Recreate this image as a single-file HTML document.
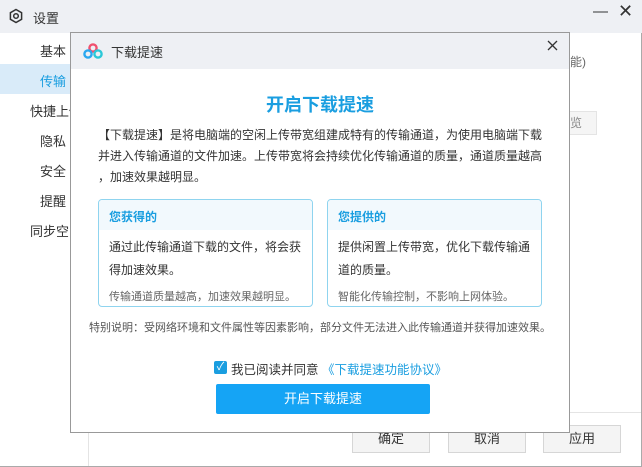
<!DOCTYPE html>
<html><head><meta charset="utf-8"><style>
*{margin:0;padding:0;box-sizing:border-box}
body{width:642px;height:467px;overflow:hidden;background:#fff;font-family:"Liberation Sans","Noto Sans CJK SC",sans-serif;position:relative;color:#333}
.abs{position:absolute}
.tb{left:0;top:0;width:642px;height:33px;background:#eef0f4}
.side{font-size:13px;color:#333;text-align:right}
.btn{background:#f4f4f4;border:1px solid #d6d6d6;font-size:13px;text-align:center;line-height:26px;color:#333}
.dlg{left:70px;top:32px;width:500px;height:401px;border:1px solid #999;background:#fff}
.box{border:1px solid #8fd4ef;border-radius:4px;width:215px;height:108px;background:#fff;overflow:hidden}
.bh{height:30px;background:#f2f9fd;color:#1a9ee0;font-weight:bold;font-size:12px;padding:8px 0 0 10px}
.bt{font-size:12px;color:#333;line-height:23px;padding:6px 8px 0 10px}
.bs{font-size:11px;color:#666;padding:6px 8px 0 10px}
</style></head><body>
<div class="abs tb"></div>
<svg class="abs" style="left:8px;top:8px" width="16" height="16" viewBox="0 0 16 16"><path d="M8 1.5l5.6 3.2v6.6L8 14.5 2.4 11.3V4.7z" fill="none" stroke="#333" stroke-width="1.5"/><circle cx="8" cy="8" r="2.3" fill="none" stroke="#333" stroke-width="1.5"/></svg>
<div class="abs" style="left:33px;top:8px;font-size:13px">设置</div>
<div class="abs" style="left:593px;top:3px;font-size:15px">—</div>
<div class="abs" style="left:618px;top:1px;font-size:18px">✕</div>
<div class="abs" style="left:0;top:64px;width:70px;height:30px;background:#d9ebf9"></div>
<div class="abs side" style="left:0;top:41px;width:66px">基本</div>
<div class="abs side" style="left:0;top:71px;width:66px;color:#1a9ee0">传输</div>
<div class="abs side" style="left:30px;top:101px">快捷上传</div>
<div class="abs side" style="left:0;top:131px;width:66px">隐私</div>
<div class="abs side" style="left:0;top:161px;width:66px">安全</div>
<div class="abs side" style="left:0;top:191px;width:66px">提醒</div>
<div class="abs side" style="left:30px;top:221px">同步空间</div>
<div class="abs" style="left:570px;top:53px;font-size:12px;color:#666">能)</div>
<div class="abs" style="left:570px;top:111px;width:27px;height:24px;background:#f5f5f5;border:1px solid #e4e4e4;border-left:none;font-size:12px;color:#888;line-height:22px">览</div>
<div class="abs" style="left:88px;top:413px;width:1px;height:54px;background:#e4e4e4"></div>
<div class="abs" style="left:570px;top:412px;width:72px;height:1px;background:#e4e4e4"></div>
<div class="abs btn" style="left:352px;top:425px;width:78px;height:28px">确定</div>
<div class="abs btn" style="left:448px;top:425px;width:78px;height:28px">取消</div>
<div class="abs btn" style="left:543px;top:425px;width:78px;height:28px">应用</div>
<div class="abs" style="right:0;top:33px;width:1px;height:434px;background:#aaa"></div>
<div class="abs" style="left:0;bottom:0;width:642px;height:1px;background:#aaa"></div>

<div class="abs dlg">
 <div class="abs" style="left:0;top:0;width:498px;height:36px;background:#eef0f4"></div>
 <svg class="abs" style="left:12px;top:10px" width="20" height="16" viewBox="0 0 20 16"><circle cx="10" cy="5" r="3.6" fill="none" stroke="#f0506e" stroke-width="2.4"/><circle cx="5" cy="11" r="3.6" fill="none" stroke="#2aa8f0" stroke-width="2.4"/><circle cx="15" cy="11" r="3.6" fill="none" stroke="#2ac8d8" stroke-width="2.4"/></svg>
 <div class="abs" style="left:40px;top:9px;font-size:13px">下载提速</div>
 <svg class="abs" style="left:476px;top:7px" width="11" height="11" viewBox="0 0 11 11"><path d="M1 1L10 10M10 1L1 10" stroke="#333" stroke-width="1.3"/></svg>
 <div class="abs" style="left:0;top:58px;width:498px;text-align:center;font-size:18px;font-weight:bold;color:#1a9ee0">开启下载提速</div>
 <div class="abs" style="left:27px;top:92px;width:470px;white-space:nowrap;font-size:12px;line-height:21px;color:#333">【下载提速】是将电脑端的空闲上传带宽组建成特有的传输通道，为使用电脑端下载<br>并进入传输通道的文件加速。上传带宽将会持续优化传输通道的质量，通道质量越高<br>，加速效果越明显。</div>
 <div class="abs box" style="left:27px;top:166px"><div class="bh">您获得的</div><div class="bt">通过此传输通道下载的文件，将会获得加速效果。</div><div class="bs">传输通道质量越高，加速效果越明显。</div></div>
 <div class="abs box" style="left:256px;top:166px"><div class="bh">您提供的</div><div class="bt">提供闲置上传带宽，优化下载传输通道的质量。</div><div class="bs">智能化传输控制，不影响上网体验。</div></div>
 <div class="abs" style="left:0;top:286px;width:498px;text-align:center;font-size:11px;color:#555">特别说明：受网络环境和文件属性等因素影响，部分文件无法进入此传输通道并获得加速效果。</div>
 <div class="abs" style="left:143px;top:328px;width:13px;height:13px;background:#1a9ee0;border-radius:2px;color:#fff;font-size:11px;line-height:13px;text-align:center">✓</div>
 <div class="abs" style="left:160px;top:326px;font-size:12.5px">我已阅读并同意 <span style="color:#1a9ee0">《下载提速功能协议》</span></div>
 <div class="abs" style="left:145px;top:351px;width:214px;height:30px;background:#15a4f5;border-radius:2px;color:#fff;text-align:center;line-height:30px;font-size:13px">开启下载提速</div>
</div>
</body></html>
